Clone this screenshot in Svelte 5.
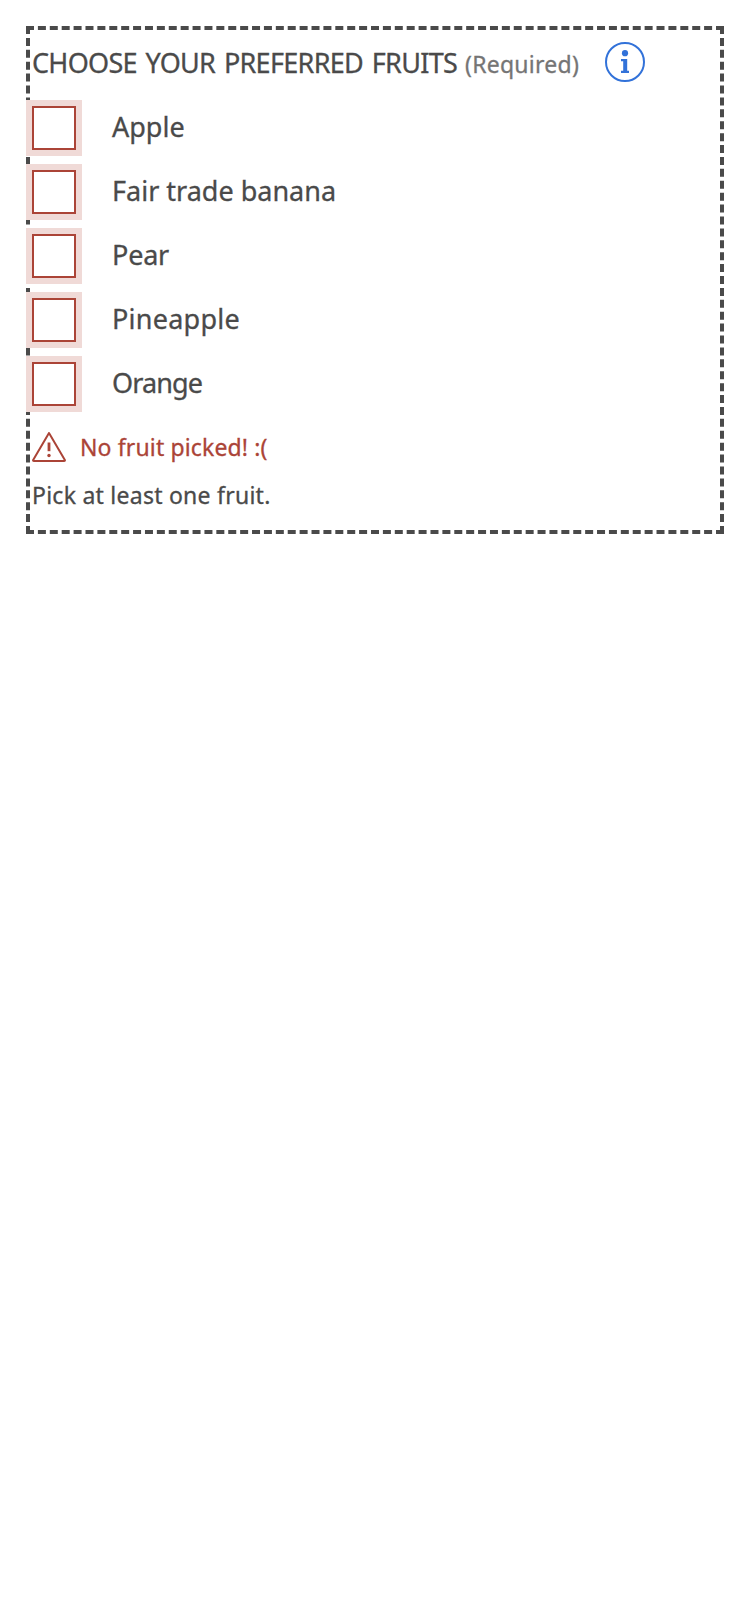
<script>
  const fruits = [
    { name: 'Apple', tracking: 0 },
    { name: 'Fair trade banana', tracking: 0 },
    { name: 'Pear', tracking: -0.2 },
    { name: 'Pineapple', tracking: 0.25 },
    { name: 'Orange', tracking: -0.9 }
  ];
</script>

<fieldset class="group">
  <div class="heading">
    <span class="title">CHOOSE YOUR PREFERRED FRUITS</span>
    <span class="required">(Required)</span>
    <button class="info" type="button" aria-label="Information">
      <svg width="40" height="40" viewBox="0 0 40 40">
        <circle cx="20" cy="20" r="19" fill="none" stroke="currentColor" stroke-width="2" />
        <circle cx="20" cy="11.200" r="3.100" fill="currentColor" />
        <path d="M16 17h6.200v11.800H24V31h-8v-2.200h2.200v-9.500H16z" fill="currentColor" />
      </svg>
    </button>
  </div>

  <div class="options">
    {#each fruits as fruit}
      <label class="option">
        <input type="checkbox" />
        <span style="letter-spacing: {fruit.tracking}px">{fruit.name}</span>
      </label>
    {/each}
  </div>

  <div class="error">
    <svg width="34" height="30" viewBox="0 0 34 30" fill="none" stroke="currentColor" stroke-linejoin="round">
      <path d="M17 1 33 28.200Q33 29 32.200 29H1.800Q1 29 1 28.200Z" stroke-width="2" />
      <path d="M17 10.500v8.700" stroke-width="2.800" />
      <circle cx="17" cy="23.500" r="1.700" fill="currentColor" stroke="none" />
    </svg>
    <span>No fruit picked! :(</span>
  </div>
  <div class="help">Pick at least one fruit.</div>
</fieldset>

<style>
  :global(body) {
    background: #fff;
  }
  .group {
    box-sizing: border-box;
    width: 698px;
    height: 508px;
    margin: 26px;
    padding: 12px 2px 0;
    border: 4px dashed #4a4a4a;
    color: #4a4a4a;
    font-family: "Noto Sans", sans-serif;
    font-size: 27px;
    white-space: nowrap;
    -webkit-text-stroke: 0.3px currentColor;
  }
  .heading {
    display: flex;
    align-items: baseline;
    height: 42px;
    line-height: 42px;
  }
  .title {
    width: 433px;
    letter-spacing: -0.7px;
    word-spacing: 2.4px;
  }
  .required {
    width: 140px;
    color: #757575;
    font-size: 23px;
    letter-spacing: 0.25px;
  }
  .info {
    align-self: flex-start;
    width: 40px;
    height: 40px;
    padding: 0;
    border: 0;
    background: none;
    color: #3272d9;
  }
  .info svg,
  .error svg {
    display: block;
  }
  .options {
    display: grid;
    gap: 20px;
    margin-top: 22px;
  }
  .option {
    display: flex;
    align-items: flex-start;
    gap: 36px;
    height: 44px;
    line-height: 42px;
  }
  input {
    appearance: none;
    box-sizing: border-box;
    flex: none;
    width: 44px;
    height: 44px;
    margin: 0;
    border: 2px solid #ab4437;
    border-radius: 0;
    background: #fff;
    box-shadow: 0 0 0 6px #f0dad7;
  }
  .error {
    display: flex;
    align-items: center;
    gap: 14px;
    height: 32px;
    margin-top: 25px;
    color: #ab4437;
    font-size: 23px;
    line-height: 32px;
    letter-spacing: 0.14px;
  }
  .help {
    margin-top: 16px;
    font-size: 23px;
    line-height: 32px;
    letter-spacing: 0.25px;
  }
</style>
